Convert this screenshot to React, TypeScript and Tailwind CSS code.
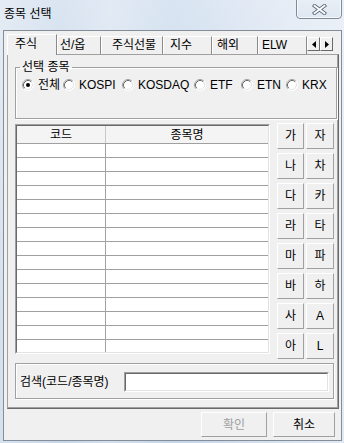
import React from "react";

function Radio({ checked }: { checked?: boolean }) {
  return (
    <svg width="12" height="12" viewBox="0 0 12 12" className="shrink-0">
      <circle cx="6" cy="6" r="5.5" fill="#fff" />
      <path d="M2.11 9.89 A5.5 5.5 0 0 1 9.89 2.11" stroke="#a0a0a0" fill="none" />
      <path d="M9.89 2.11 A5.5 5.5 0 0 1 2.11 9.89" stroke="#ffffff" fill="none" />
      <path d="M2.82 9.18 A4.5 4.5 0 0 1 9.18 2.82" stroke="#696969" fill="none" />
      <path d="M9.18 2.82 A4.5 4.5 0 0 1 2.82 9.18" stroke="#e3e3e3" fill="none" />
      {checked && <circle cx="6" cy="6" r="2" fill="#000" />}
    </svg>
  );
}

function Btn({
  children,
  className,
  disabled,
}: {
  children: React.ReactNode;
  className: string;
  disabled?: boolean;
}) {
  return (
    <div
      className={
        "flex items-center justify-center border border-t-white border-l-white border-r-[#a0a0a0] border-b-[#a0a0a0] bg-[#f0f0f0] leading-none " +
        (disabled ? "text-[#a0a0a0] " : "text-black ") +
        className
      }
    >
      {children}
    </div>
  );
}

const tabs: { label: string; w: string; pl: string }[] = [
  { label: "선/옵", w: "w-[44px]", pl: "pl-[2px]" },
  { label: "주식선물", w: "w-[62px]", pl: "pl-[10px]" },
  { label: "지수", w: "w-[49px]", pl: "pl-[6px]" },
  { label: "해외", w: "w-[46px]", pl: "pl-[4px]" },
  { label: "ELW", w: "w-[49px]", pl: "pl-[3px]" },
];

const radios: { label: string; w: string; checked?: boolean }[] = [
  { label: "전체", w: "w-[41px]", checked: true },
  { label: "KOSPI", w: "w-[59px]" },
  { label: "KOSDAQ", w: "w-[72px]" },
  { label: "ETF", w: "w-[47px]" },
  { label: "ETN", w: "w-[45px]" },
  { label: "KRX", w: "w-[50px]" },
];

const letters = ["가", "자", "나", "차", "다", "카", "라", "타", "마", "파", "바", "하", "사", "A", "아", "L"];

export default function App() {
  const rows = Array.from({ length: 16 }, (_, i) => i);
  return (
    <div className="w-[344px] h-[443px] overflow-hidden flex flex-col text-[12px] text-black font-['Liberation_Sans','Noto_Sans_CJK_KR',sans-serif] bg-[linear-gradient(180deg,rgba(255,255,255,0.35)_0%,rgba(255,255,255,0)_70%),linear-gradient(90deg,#d6e1ee_0%,#c6d7ea_18%,#d3dfee_32%,#c4d6eb_50%,#cfdcee_68%,#dae4f1_85%,#e1e9f3_100%)]">
      {/* title bar */}
      <div className="h-[30px] shrink-0 flex items-start justify-between">
        <div className="pl-[4px] pt-[7px] leading-[14px]">종목 선택</div>
        <div className="mr-[2px] -mt-[2px] w-[46px] h-[21px] rounded-b-[4px] border border-[#7f8b9b] bg-[linear-gradient(180deg,#e9eff6_0%,#dfe7f1_100%)] shadow-[inset_0_0_0_1px_rgba(255,255,255,0.7)] flex items-center justify-center pt-[2px]">
          <svg width="15" height="11" viewBox="0 0 15 11">
            <path d="M2.5 1.8 L12.5 9.2 M12.5 1.8 L2.5 9.2" stroke="#5d6b7d" strokeWidth="3.6" strokeLinecap="square" />
            <path d="M2.5 1.8 L12.5 9.2 M12.5 1.8 L2.5 9.2" stroke="#ffffff" strokeWidth="1.8" strokeLinecap="square" />
          </svg>
        </div>
      </div>

      {/* client area */}
      <div className="ml-[3px] w-[339px] h-[411px] shrink-0 border border-[#858d98] bg-[#f0f0f0] flex flex-col">
        {/* tab control */}
        <div className="ml-[3px] mt-[3px] w-[332px] flex flex-col">
          <div className="h-[20px] flex items-end">
            <div className="relative z-10 -mb-[1px] h-[21px] w-[50px] border-l border-t border-r border-l-white border-t-white border-r-[#8a8a8a] bg-[#f0f0f0] pl-[7px] pt-[2px] leading-[14px]">
              주식
            </div>
            {tabs.map((t) => (
              <div
                key={t.label}
                className={
                  "h-[18px] border-l border-t border-r border-l-white border-t-white border-r-[#8a8a8a] leading-[14px] pt-[1px] " +
                  t.w +
                  " " +
                  t.pl
                }
              >
                {t.label}
              </div>
            ))}
            <div className="self-start mt-[3px] flex">
              <div className="w-[13px] h-[14px] border border-t-white border-l-white border-r-[#696969] border-b-[#696969] bg-[#f0f0f0] flex items-center justify-center">
                <svg width="4" height="7" viewBox="0 0 4 7">
                  <path d="M4 0 L0 3.5 L4 7 Z" fill="#000" />
                </svg>
              </div>
              <div className="w-[13px] h-[14px] border border-t-white border-l-white border-r-[#696969] border-b-[#696969] bg-[#f0f0f0] flex items-center justify-center">
                <svg width="4" height="7" viewBox="0 0 4 7">
                  <path d="M0 0 L4 3.5 L0 7 Z" fill="#000" />
                </svg>
              </div>
            </div>
          </div>

          {/* panel */}
          <div className="h-[355px] border border-t-[#a0a0a0] border-l-[#a0a0a0] border-r-[#696969] border-b-[#696969] shadow-[inset_-1px_-1px_0_#a0a0a0] flex flex-col">
            {/* 선택 종목 group */}
            <fieldset className="mt-[5px] ml-[7px] w-[319px] h-[59px] border border-[#a0a0a0] shadow-[inset_1px_1px_0_#fff,1px_1px_0_#fff]">
              <legend className="ml-[4px] px-[2px] leading-[14px]">선택 종목</legend>
              <div className="mt-[4px] pl-[6px] flex items-center h-[14px]">
                {radios.map((r) => (
                  <div key={r.label} className={"flex items-center shrink-0 " + r.w}>
                    <Radio checked={r.checked} />
                    <span className="ml-[4px] leading-[14px]">{r.label}</span>
                  </div>
                ))}
              </div>
            </fieldset>

            {/* list + letter buttons */}
            <div className="mt-[4px] ml-[7px] flex items-start">
              <div className="mt-[1px] w-[255px] h-[230px] border border-t-[#a0a0a0] border-l-[#a0a0a0] border-r-white border-b-white">
                <div className="h-full border border-t-[#696969] border-l-[#696969] border-r-[#e3e3e3] border-b-[#e3e3e3] bg-white overflow-hidden">
                  <div className="flex h-[18px] border-b border-[#a0a0a0] bg-[#f4f4f4]">
                    <div className="w-[89px] border-r border-[#c8c8c8] flex items-center justify-center leading-none">코드</div>
                    <div className="flex-1 flex items-center justify-center leading-none">종목명</div>
                  </div>
                  {rows.map((i) => (
                    <div key={i} className="flex h-[14px] border-b border-[#a0a0a0]">
                      <div className="w-[89px] border-r border-[#a0a0a0]" />
                    </div>
                  ))}
                </div>
              </div>
              <div className="ml-[7px] grid grid-cols-[27px_28px] gap-x-[2px] gap-y-[4px]">
                {letters.map((l) => (
                  <Btn key={l} className="h-[26px]">
                    {l}
                  </Btn>
                ))}
              </div>
            </div>

            {/* search group */}
            <div className="mt-[4px] ml-[7px] w-[319px] h-[36px] border border-[#a0a0a0] shadow-[inset_1px_1px_0_#fff,1px_1px_0_#fff] flex items-center pl-[4px] pt-[1px]">
              <span className="w-[104px] leading-[14px]">검색(코드/종목명)</span>
              <div className="w-[205px] h-[20px] border border-t-[#a0a0a0] border-l-[#a0a0a0] border-r-white border-b-white">
                <div className="h-full border border-t-[#696969] border-l-[#696969] border-r-[#e3e3e3] border-b-[#e3e3e3] bg-white" />
              </div>
            </div>
          </div>
        </div>

        {/* bottom buttons */}
        <div className="mt-[3px] mr-[6px] flex justify-end gap-[6px]">
          <Btn className="w-[66px] h-[25px]" disabled>
            확인
          </Btn>
          <Btn className="w-[62px] h-[25px]">취소</Btn>
        </div>
      </div>
    </div>
  );
}
